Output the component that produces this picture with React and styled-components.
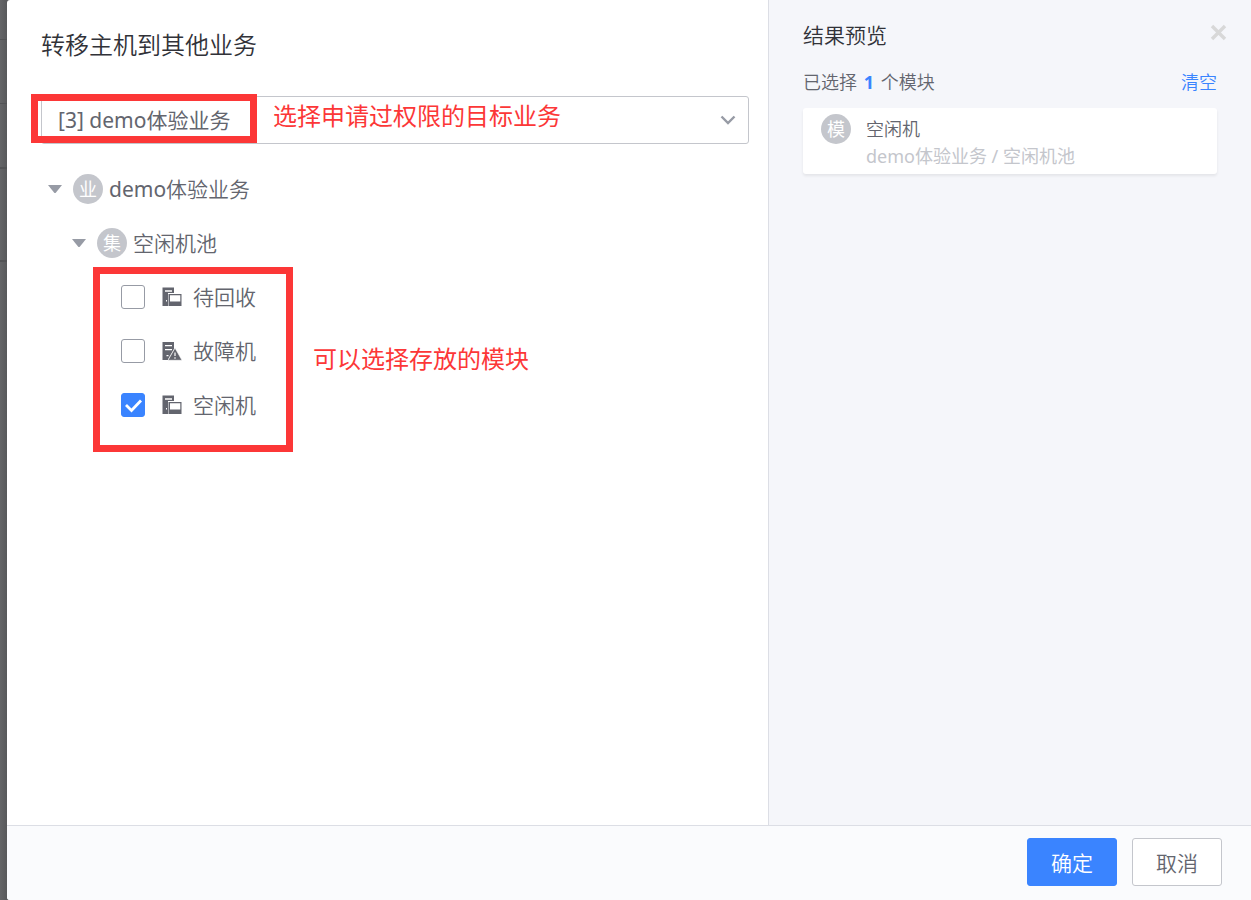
import React, { useState } from "react";
import styled, { createGlobalStyle } from "styled-components";

const GlobalStyle = createGlobalStyle`
  * {
    box-sizing: border-box;
  }
  body {
    margin: 0;
    background: #5e5f61;
    color: #63656e;
    font-family: "Noto Sans", "Noto Sans CJK SC", sans-serif;
    font-size: 21px;
    font-weight: 350;
  }
  button, select, input {
    font-family: inherit;
    font-weight: inherit;
  }
`;
const Backdrop = styled.div`
  min-height: 100vh;
  display: flex;
  padding-left: 7px;
  background: linear-gradient(#525355, #525355) 0 39px / 100% 1px no-repeat,
    linear-gradient(#525355, #525355) 0 103px / 100% 1px no-repeat,
    linear-gradient(#525355, #525355) 0 167px / 100% 2px no-repeat,
    linear-gradient(#525355, #525355) 0 260px / 100% 2px no-repeat,
    linear-gradient(90deg, #646567 0, #58595b 7px);
`;
const Dialog = styled.div`
  flex: 1;
  display: flex;
  flex-direction: column;
  background: #fff;
  border-radius: 3px 0 0 3px;
  overflow: hidden;
`;
const Body = styled.div`
  flex: 1;
  display: flex;
`;
const Main = styled.main`
  flex: 1;
  padding: 27px 19px 0 34px;
`;
const Title = styled.h1`
  margin: 0 0 33px;
  font-size: 24px;
  line-height: 36px;
  font-weight: inherit;
  color: #313238;
`;
const Field = styled.div`
  position: relative;
  display: grid;
  align-items: center;
`;
const Select = styled.select`
  grid-area: 1 / 1;
  width: 100%;
  height: 48px;
  padding: 0 48px 0 16px;
  border: 1px solid #c4c6cc;
  border-radius: 3px;
  background: #fff;
  font-size: 21px;
  font-weight: 400;
  color: #63656e;
  appearance: none;
`;
const Chevron = styled.svg`
  grid-area: 1 / 1;
  justify-self: end;
  margin-right: 13px;
  pointer-events: none;
`;
const Mark = styled.div`
  position: absolute;
  top: ${(props) => props.$top}px;
  left: ${(props) => props.$left}px;
  width: ${(props) => props.$width}px;
  height: ${(props) => props.$height}px;
  border: 7px solid #fc3737;
  pointer-events: none;
`;
const Note = styled.span`
  position: absolute;
  top: ${(props) => props.$top}px;
  left: ${(props) => props.$left}px;
  font-size: 24px;
  line-height: 36px;
  font-weight: 400;
  color: #fc3737;
  white-space: nowrap;
  pointer-events: none;
`;
const Tree = styled.ul`
  list-style: none;
  margin: 0;
  padding: ${(props) => (props.$root ? "18px 0 0 6px" : "0 0 0 24px")};
`;
const Group = styled.div`
  position: relative;
`;
const Row = styled.div`
  height: 54px;
  display: flex;
  align-items: center;
  gap: 6px;
`;
const Toggle = styled.button`
  display: flex;
  width: 20px;
  padding: 0 0 0 1px;
  border: 0;
  background: none;
`;
const Badge = styled.span`
  flex: none;
  width: 30px;
  height: 30px;
  border-radius: 50%;
  background: #c4c6cc;
  color: #fff;
  font-size: 18px;
  font-weight: 400;
  line-height: 30px;
  text-align: center;
`;
const Name = styled.span`
  padding-bottom: 2px;
`;
const Latin = styled.span`
  font-weight: 400;
`;
const Leaf = styled.label`
  height: 54px;
  display: flex;
  align-items: center;
  gap: 11px;
  padding-left: 26px;
`;
const Tick = styled.span`
  display: grid;
  margin-right: 6px;

  svg {
    grid-area: 1 / 1;
    pointer-events: none;
  }
`;
const Checkbox = styled.input`
  grid-area: 1 / 1;
  width: 24px;
  height: 24px;
  margin: 0;
  border: 1px solid #979ba5;
  border-radius: 3px;
  background: #fff;
  appearance: none;

  &:checked {
    border-color: #3a84ff;
    background: #3a84ff;
  }
`;
const Aside = styled.aside`
  flex: 0 0 483px;
  padding: 19px 34px 0;
  border-left: 1px solid #dcdee5;
  background: #f5f6fa;
`;
const AsideHead = styled.div`
  display: flex;
  justify-content: space-between;
  margin-right: -10px;
`;
const AsideTitle = styled.h2`
  margin: 0;
  font-size: 21px;
  line-height: 32px;
  font-weight: inherit;
  color: #313238;
`;
const Close = styled.button`
  display: flex;
  align-items: center;
  height: 26px;
  padding: 0;
  border: 0;
  background: none;
`;
const Summary = styled.div`
  display: flex;
  justify-content: space-between;
  margin: 17px 0 12px;
  font-size: 18px;
  line-height: 28px;
`;
const Count = styled.b`
  margin: 0 2px;
  color: #3a84ff;
  font-weight: 700;
`;
const Clear = styled.a`
  color: #3a84ff;
  text-decoration: none;
`;
const Card = styled.div`
  display: flex;
  gap: 15px;
  padding: 6px 18px;
  border-radius: 3px;
  background: #fff;
  box-shadow: 0 2px 3px rgba(0, 0, 0, 0.07);
  font-size: 18px;
  line-height: 27px;
`;
const CardText = styled.div`
  padding-top: 2px;
  margin-bottom: -2px;
`;
const Path = styled.div`
  color: #c4c6cc;
  font-weight: 400;
`;
const Footer = styled.footer`
  display: flex;
  justify-content: flex-end;
  gap: 15px;
  padding: 12px 29px 14px;
  border-top: 1px solid #dcdee5;
  background: #fafbfd;
`;
const Button = styled.button`
  width: 90px;
  height: 48px;
  padding: 0;
  border: 1px solid ${(props) => (props.$primary ? "#3a84ff" : "#c4c6cc")};
  border-radius: 3px;
  background: ${(props) => (props.$primary ? "#3a84ff" : "#fff")};
  color: ${(props) => (props.$primary ? "#fff" : "#63656e")};
  font-size: 21px;
`;

const modules = [
  { id: "recycle", name: "待回收" },
  { id: "fault", name: "故障机", warning: true },
  { id: "idle", name: "空闲机" },
];

function Arrow() {
  return (
    <svg width="14" height="8" viewBox="0 0 14 8">
      <path d="M0 0h14L8 7.4q-1 1-2 0z" fill="#979ba5" />
    </svg>
  );
}

function HostIcon({ warning }) {
  if (warning) {
    return (
      <svg width="20" height="20" viewBox="0 0 20 20">
        <path
          d="M0.500 1H12v7L6.500 17.500V19h-6zM3 4v1.300h7V4zM3 8v1.300h7V8zM4.500 14v1.300h2V14z"
          fill="#63656e"
          fillRule="evenodd"
        />
        <path
          d="M13 7 20 19.300H6z"
          fill="#63656e"
          stroke="#fff"
          strokeWidth="0.600"
        />
        <path d="M13 11.500V15M13 16.300V17.800" stroke="#fff" strokeWidth="1.200" />
      </svg>
    );
  }
  return (
    <svg width="20" height="20" viewBox="0 0 20 20">
      <path
        d="M0.500 0.500H12V6H6v13H0.500zM3 3.300v1.400h7V3.300zM4 13v1.500h1V13z"
        fill="#63656e"
        fillRule="evenodd"
      />
      <path
        d="M6.500 7H19.500v12H6.500zM8 8.200v6.300h10.300V8.200z"
        fill="#63656e"
        fillRule="evenodd"
      />
    </svg>
  );
}

function App() {
  const [checked, setChecked] = useState("idle");
  const selected = modules.filter((item) => item.id === checked);
  function onClear(e) {
    e.preventDefault();
    setChecked("");
  }

  return (
    <Backdrop>
      <GlobalStyle />
      <Dialog role="dialog" aria-labelledby="title">
        <Body>
          <Main>
            <Title id="title">转移主机到其他业务</Title>
            <Field>
              <Select aria-label="业务">
                <option>[3] demo体验业务</option>
              </Select>
              <Chevron width="16" height="10" viewBox="0 0 16 10">
                <path
                  d="M1.500 1.500 8 8l6.500-6.500"
                  fill="none"
                  stroke="#979ba5"
                  strokeWidth="2.400"
                />
              </Chevron>
              <Mark $top={-2} $left={-10} $width={226} $height={49} />
              <Note $top={2} $left={232}>
                选择申请过权限的目标业务
              </Note>
            </Field>
            <Tree $root>
              <li>
                <Row>
                  <Toggle aria-label="demo体验业务">
                    <Arrow />
                  </Toggle>
                  <Badge>业</Badge>
                  <Name>
                    <Latin>demo</Latin>体验业务
                  </Name>
                </Row>
                <Tree>
                  <li>
                    <Row>
                      <Toggle aria-label="空闲机池">
                        <Arrow />
                      </Toggle>
                      <Badge>集</Badge>
                      <Name>空闲机池</Name>
                    </Row>
                    <Group>
                      <Tree>
                        {modules.map((item) => (
                          <li key={item.id}>
                            <Leaf>
                              <Tick>
                                <Checkbox
                                  type="checkbox"
                                  checked={checked === item.id}
                                  onChange={(e) =>
                                    setChecked(e.target.checked ? item.id : "")
                                  }
                                />
                                {checked === item.id && (
                                  <svg
                                    width="24"
                                    height="24"
                                    viewBox="0 0 24 24"
                                  >
                                    <path
                                      d="m5 12 5.500 5.500 9.500-10"
                                      fill="none"
                                      stroke="#fff"
                                      strokeWidth="2.800"
                                    />
                                  </svg>
                                )}
                              </Tick>
                              <HostIcon warning={item.warning} />
                              <Name>{item.name}</Name>
                            </Leaf>
                          </li>
                        ))}
                      </Tree>
                      <Mark $top={-3} $left={22} $width={200} $height={185} />
                      <Note $top={71} $left={242}>
                        可以选择存放的模块
                      </Note>
                    </Group>
                  </li>
                </Tree>
              </li>
            </Tree>
          </Main>
          <Aside>
            <AsideHead>
              <AsideTitle>结果预览</AsideTitle>
              <Close aria-label="关闭">
                <svg width="17" height="17" viewBox="0 0 17 17">
                  <path
                    d="m2 2 13 13M15 2 2 15"
                    stroke="#d8d8d8"
                    strokeWidth="3.400"
                  />
                </svg>
              </Close>
            </AsideHead>
            <Summary>
              <span>
                已选择 <Count>{selected.length}</Count> 个模块
              </span>
              <Clear href="#" onClick={onClear}>
                清空
              </Clear>
            </Summary>
            {selected.map((item) => (
              <Card key={item.id}>
                <Badge>模</Badge>
                <CardText>
                  <div>{item.name}</div>
                  <Path>demo体验业务 / 空闲机池</Path>
                </CardText>
              </Card>
            ))}
          </Aside>
        </Body>
        <Footer>
          <Button $primary>确定</Button>
          <Button>取消</Button>
        </Footer>
      </Dialog>
    </Backdrop>
  );
}

export default App;
